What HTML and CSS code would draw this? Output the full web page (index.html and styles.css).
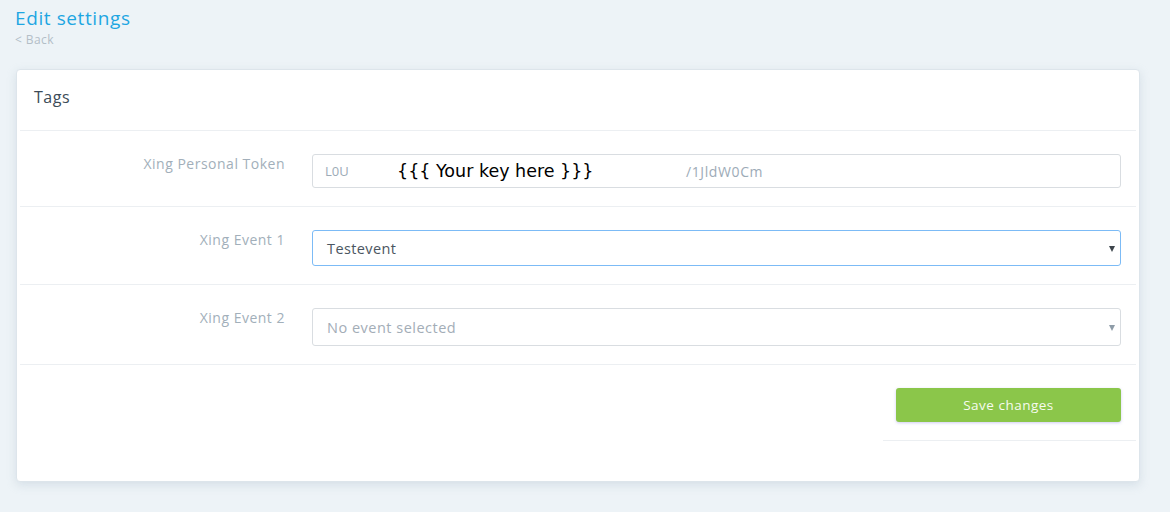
FILE: index.html
```html
<!DOCTYPE html>
<html>
<head>
<meta charset="utf-8">
<link rel="stylesheet" href="styles.css">
</head>
<body>
<div class="page">
  <h1 class="title">Edit settings</h1>
  <a class="back">&lt; Back</a>
  <div class="card">
    <div class="card-head">Tags</div>
    <div class="row">
      <div class="label">Xing Personal Token</div>
      <div class="field">
        <div class="input token">
          <span class="tok-a">L0U</span>
          <span class="tok-key">{{{ Your key here }}}</span>
          <span class="tok-b">/1JldW0Cm</span>
        </div>
      </div>
    </div>
    <div class="row">
      <div class="label">Xing Event 1</div>
      <div class="field">
        <div class="input select focused">
          <span class="val">Testevent</span>
          <span class="caret"></span>
        </div>
      </div>
    </div>
    <div class="row">
      <div class="label">Xing Event 2</div>
      <div class="field">
        <div class="input select tall">
          <span class="ph">No event selected</span>
          <span class="caret light"></span>
        </div>
      </div>
    </div>
    <div class="actions">
      <div class="action-col">
        <button class="btn">Save changes</button>
      </div>
    </div>
  </div>
</div>
</body>
</html>
```
FILE: styles.css
```css
* { box-sizing: border-box; }
html, body { margin: 0; padding: 0; }
body {
  background: #edf3f7;
  font-family: "Open Sans", "Noto Sans", sans-serif;
  width: 1170px;
  height: 512px;
  overflow: hidden;
}
.page { padding: 6px 30px 0 15px; }
.title {
  margin: 0;
  font-size: 19px;
  font-weight: 400;
  color: #1ea6e2;
  line-height: 24px;
  letter-spacing: 0.6px;
}
.back {
  display: block;
  font-size: 12px;
  color: #b3bec7;
  line-height: 16px;
  margin-top: 2px;
  letter-spacing: 0.4px;
}
.card {
  margin: 21px 0 0 1px;
  background: #fff;
  border-radius: 4px;
  border: 1px solid #dde5eb;
  box-shadow: 0 3px 10px rgba(160, 180, 195, 0.3);
  padding: 0 3px 40px 3px;
  height: 413px;
}
.card-head {
  height: 61px;
  padding: 16px 0 0 14px;
  font-size: 16px;
  letter-spacing: 0.5px;
  color: #3c4b57;
  border-bottom: 1px solid #eceff2;
}
.row {
  display: grid;
  grid-template-columns: 265px 1fr;
  column-gap: 27px;
  padding: 23px 15px 18px 0;
  border-bottom: 1px solid #eceff2;
}
.label {
  text-align: right;
  font-size: 14px;
  letter-spacing: 0.5px;
  color: #a2afba;
  padding-top: 1px;
  line-height: 18px;
}
.input {
  border: 1px solid #d9dde1;
  border-radius: 3px;
  height: 34px;
  display: flex;
  align-items: center;
  padding: 0 0 0 12px;
  font-size: 14px;
  position: relative;
}
.select { height: 36px; padding-left: 14px; }
.select.tall { height: 38px; }
.focused { border-color: #7cbbf6; }
.tok-a { color: #9dabb7; font-size: 13px; width: 72px; }
.tok-key {
  color: #000;
  font-family: "DejaVu Sans", sans-serif;
  font-size: 17.5px;
  width: 289px;
}
.tok-b { color: #9dabb7; font-size: 14px; letter-spacing: 0.6px; }
.val { color: #4b5661; font-size: 14.5px; letter-spacing: 0.4px; }
.ph { color: #a3adb7; font-size: 14.5px; letter-spacing: 0.5px; }
.caret {
  position: absolute;
  right: 5px;
  top: 50%;
  margin-top: -2px;
  width: 0; height: 0;
  border-left: 3.5px solid transparent;
  border-right: 3.5px solid transparent;
  border-top: 6px solid #3d454c;
}
.caret.light { border-top-color: #8e9ca8; }
.actions {
  display: flex;
  justify-content: flex-end;
}
.action-col {
  width: 253px;
  padding: 23px 15px 18px 13px;
  border-bottom: 1px solid #eceff2;
}
.btn {
  display: block;
  width: 100%;
  height: 34px;
  border: 0;
  border-radius: 3px;
  background: #8bc64a;
  color: #f6fbef;
  font-family: "Open Sans", sans-serif;
  font-size: 13.5px;
  letter-spacing: 0.5px;
  box-shadow: 0 1px 3px rgba(120, 110, 220, 0.35);
}
```
